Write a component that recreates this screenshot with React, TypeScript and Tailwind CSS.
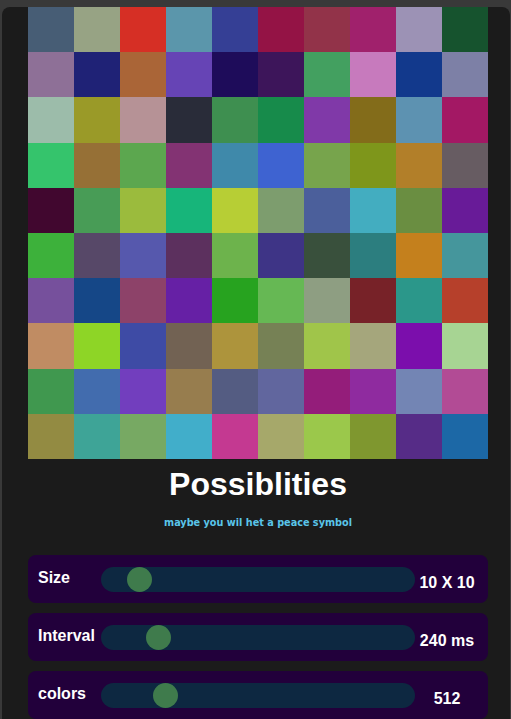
import React from "react";

const COLORS: string[] = [
  "#475d75", "#97a384", "#d62f25", "#5b96ab", "#353f95", "#941345", "#923349", "#a0216c", "#9c92b5", "#16532e",
  "#8e7097", "#1f2276", "#aa6537", "#6644b5", "#1e0c5a", "#3d155a", "#43a060", "#c77abd", "#12398c", "#7d80a6",
  "#9cbcaa", "#9a9a28", "#b69296", "#292c39", "#3e8f50", "#178b4b", "#8039a8", "#836c1a", "#5d92b1", "#a31864",
  "#35c46c", "#967036", "#5ca74f", "#833373", "#3f89aa", "#3e63d1", "#77a44c", "#7e961b", "#b27f29", "#675c62",
  "#41072f", "#489c56", "#9bbb3d", "#17b57a", "#b7ce35", "#7d9d6e", "#4b5f9b", "#43adc0", "#6a8e41", "#681b98",
  "#3db13b", "#574868", "#5658ad", "#5c305e", "#6db34c", "#3e3486", "#39503c", "#2c7e7f", "#c4801d", "#45969c",
  "#76509c", "#154787", "#8d4269", "#6620a5", "#27a31f", "#66b854", "#8e9e82", "#772228", "#2b978a", "#b6402b",
  "#c08c63", "#8ed526", "#3e4ba5", "#726253", "#ad943c", "#768155", "#a0c54a", "#a5a67c", "#7b0eac", "#a7d493",
  "#40984f", "#426cae", "#723ebe", "#977d4e", "#545c82", "#61669e", "#941d7a", "#8f2b9f", "#7385b4", "#b24b95",
  "#938b42", "#3ea497", "#77a963", "#41aeca", "#c43991", "#a6a86a", "#9bc84b", "#7f972f", "#562c87", "#1c68a6",
];

function SliderRow({ label, value, thumb }: { label: string; value: string; thumb: number }) {
  return (
    <div className="flex h-[48px] w-[460px] items-center rounded-lg bg-[#22003b] pl-[10px]">
      <div className="mb-[2px] w-[63px] text-[16px] font-bold leading-[18px] text-white">{label}</div>
      <div className="relative h-[25px] w-[314px] rounded-full bg-[#0d2841]">
        <div
          className="absolute top-0 h-[25px] w-[25px] rounded-full bg-[#3f7b4c]"
          style={{ left: thumb }}
        />
      </div>
      <div className="mt-[8px] w-[64px] text-center text-[16px] font-bold leading-[18px] text-white">{value}</div>
    </div>
  );
}

export default function App() {
  return (
    <div
      className="min-h-screen overflow-hidden bg-[#393939] pt-[7px]"
      style={{ fontFamily: '"Liberation Sans", Arial, sans-serif' }}
    >
      <div className="ml-[2px] min-h-[760px] w-[508px] rounded-lg bg-[#1b1b1b] pl-[26px]">
        <div className="grid h-[452px] w-[460px] grid-cols-10 grid-rows-10">
          {COLORS.map((c, i) => (
            <div key={i} style={{ backgroundColor: c }} />
          ))}
        </div>
        <h1 className="mt-[7px] w-[460px] text-center text-[32px] font-bold leading-[37px] text-white">
          Possiblities
        </h1>
        <p
          className="mt-[14px] w-[460px] text-center text-[9.7px] font-bold leading-[12px] text-[#5ac5e9]"
          style={{ fontFamily: '"DejaVu Sans", Verdana, sans-serif' }}
        >
          maybe you wil het a peace symbol
        </p>
        <div className="mt-[26px] flex flex-col gap-[10px]">
          <SliderRow label="Size" value="10 X 10" thumb={26} />
          <SliderRow label="Interval" value="240 ms" thumb={45} />
          <SliderRow label="colors" value="512" thumb={52} />
        </div>
      </div>
    </div>
  );
}
